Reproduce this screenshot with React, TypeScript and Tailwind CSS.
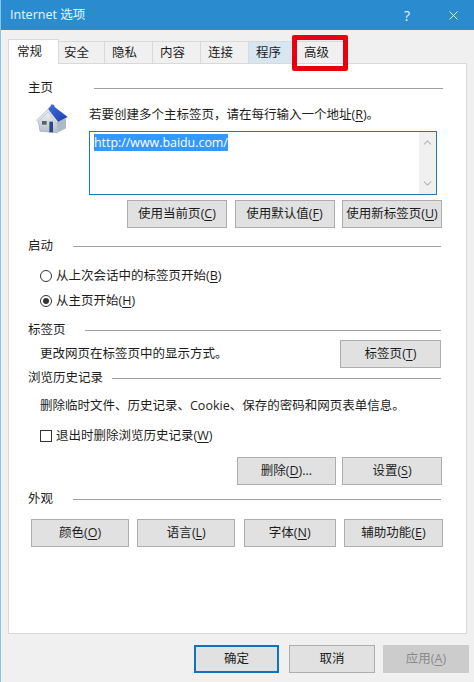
import React from 'react';
import { ChevronDown, ChevronUp, X } from 'lucide-react';

const tabs = [
  { label: '安全', cls: 'w-[46px] pl-[5px] bg-[#f0f0f0]' },
  { label: '隐私', cls: 'w-[48px] pl-[7px] bg-[#f0f0f0]' },
  { label: '内容', cls: 'w-[48px] pl-[7px] bg-[#f0f0f0]' },
  { label: '连接', cls: 'w-[48px] pl-[7px] bg-[#f0f0f0]' },
  { label: '程序', cls: 'w-[48px] pl-[7px] bg-[#d8e6f2]' },
  { label: '高级', cls: 'w-[48px] pl-[7px] bg-[#f0f0f0]' },
];

const Section = ({ title, line, className = '' }: { title: string; line: string; className?: string }) => (
  <div className={`flex items-center ${className}`}>
    <span className="whitespace-nowrap">{title}</span>
    <div className={`h-px flex-1 bg-[#a0a0a0] ${line}`} />
  </div>
);

const Btn = ({ w, label, hotkey, tail = ')' }: { w: string; label: string; hotkey?: string; tail?: string }) => (
  <div className={`flex h-[28px] items-center justify-center border border-[#adadad] bg-[#e1e1e1] whitespace-nowrap ${w}`}>
    {label}
    {hotkey && (
      <>
        (<span className="underline underline-offset-2">{hotkey}</span>{tail}
      </>
    )}
  </div>
);

const House = () => (
  <svg viewBox="48 27 96 90" className="h-[30px] w-[32px]">
    <defs>
      <linearGradient id="wall" x1="0" y1="0" x2="0" y2="1">
        <stop offset="0" stopColor="#f4f6f8" />
        <stop offset="1" stopColor="#b4bfca" />
      </linearGradient>
      <linearGradient id="roof" x1="0" y1="0" x2="1" y2="1">
        <stop offset="0" stopColor="#3f6fe0" />
        <stop offset="1" stopColor="#1a3aa8" />
      </linearGradient>
    </defs>
    <path d="M54 74 L84 46 L112 80 L112 113 L60 109 Z" fill="url(#wall)" stroke="#8c98a6" strokeWidth="1.5" />
    <path d="M112 80 L138 70 L138 100 L112 113 Z" fill="#aeb9c6" />
    <path d="M84 42 L92 33 L94 28 L102 30 L104 36 L143 66 L112 82 Z" fill="url(#roof)" />
    <path d="M49 76 L84 42 L114 80 L110 84 L84 52 L54 80 Z" fill="#dfe4ea" stroke="#8c98a6" strokeWidth="1" />
    <rect x="66" y="78" width="14" height="11" fill="#59636e" />
    <rect x="88" y="80" width="11" height="32" fill="#2c4a86" />
  </svg>
);

export default function App() {
  return (
    <div className="relative flex h-[682px] w-[474px] flex-col overflow-hidden border-l border-[#86c3ea] bg-[#f0f0f0] font-['Open_Sans','Noto_Sans_CJK_SC',sans-serif] text-[12.5px] text-[#1c1c1c]">
      {/* title bar */}
      <div className="-ml-px flex h-[30px] shrink-0 items-center bg-[#2a8ccf] pl-[10px] text-white/90">
        <span className="text-[12.5px]">Internet 选项</span>
        <span className="ml-auto mr-[36px] text-[14px]">?</span>
        <X size={15} strokeWidth={1.5} className="mr-[13px]" />
      </div>

      {/* tabs */}
      <div className="flex h-[33px] shrink-0 items-end pl-[7px]">
        <div className="relative z-10 -mb-px flex h-[25px] w-[51px] items-center border border-b-0 border-[#d9d9d9] bg-white pl-[8px]">
          常规
        </div>
        {tabs.map((t) => (
          <div key={t.label} className={`flex h-[22px] items-center border-r border-t border-[#d9d9d9] pt-[2px] ${t.cls}`}>
            {t.label}
          </div>
        ))}
      </div>

      {/* panel */}
      <div className="ml-[7px] mr-[7px] flex min-h-0 flex-1 flex-col border border-[#d9d9d9] bg-white pl-[19px] pr-[25px] pt-[14px]">
        <Section title="主页" line="ml-[41px] -mr-[2px]" className="h-5" />
        <div className="flex">
          <div className="w-[61px] shrink-0 pl-[8px] pt-[6px]">
            <House />
          </div>
          <div className="pt-[7px]">
            <div className="flex h-5 items-center whitespace-nowrap">
              若要创建多个主标签页，请在每行输入一个地址(<span className="underline underline-offset-2">R</span>)。
            </div>
            <div className="mt-[6px] flex h-[64px] w-[348px] border border-[#1f78b8] bg-white">
              <div className="flex-1 pl-[4px] pt-[2px]">
                <span className="inline-block h-[17px] bg-[#3399ff] text-[12.4px] leading-[17px] text-white">http://www.baidu.com/</span>
              </div>
              <div className="flex w-[17px] flex-col items-center justify-between bg-[#f0f0f0] py-[4px] text-[#b5b5b5]">
                <ChevronUp size={13} />
                <ChevronDown size={13} />
              </div>
            </div>
            <div className="ml-[38px] mt-[5px] flex w-[315px] justify-between">
              <Btn w="w-[100px]" label="使用当前页" hotkey="C" />
              <Btn w="w-[100px]" label="使用默认值" hotkey="F" />
              <Btn w="w-[100px]" label="使用新标签页" hotkey="U" />
            </div>
          </div>
        </div>

        <Section title="启动" line="ml-[20px]" className="mt-[8px] h-5" />
        <div className="mt-[10px] flex h-5 items-center pl-[12px]">
          <span className="mr-[4px] h-[12px] w-[12px] rounded-full border border-[#333333] bg-white" />
          从上次会话中的标签页开始(<span className="underline underline-offset-2">B</span>)
        </div>
        <div className="mt-[5px] flex h-5 items-center pl-[12px]">
          <span className="mr-[4px] flex h-[12px] w-[12px] items-center justify-center rounded-full border border-[#333333] bg-white">
            <span className="h-[6px] w-[6px] rounded-full bg-[#333333]" />
          </span>
          从主页开始(<span className="underline underline-offset-2">H</span>)
        </div>

        <Section title="标签页" line="ml-[19px]" className="mt-[9px] h-5" />
        <div className="flex items-center justify-between pl-[12px]">
          <span className="pt-px">更改网页在标签页中的显示方式。</span>
          <Btn w="w-[101px]" label="标签页" hotkey="T" />
        </div>

        <Section title="浏览历史记录" line="ml-[9px]" className="mt-[2px] h-4" />
        <div className="mt-[10px] flex h-5 items-center pl-[12px]">删除临时文件、历史记录、Cookie、保存的密码和网页表单信息。</div>
        <div className="mt-[10px] flex h-5 items-center pl-[12px]">
          <span className="mr-[4px] h-[12px] w-[12px] border border-[#333333] bg-white" />
          退出时删除浏览历史记录(<span className="underline underline-offset-2">W</span>)
        </div>
        <div className="-mr-px mt-[11px] flex justify-end gap-[6px]">
          <Btn w="w-[99px]" label="删除" hotkey="D" tail=")..." />
          <Btn w="w-[100px]" label="设置" hotkey="S" />
        </div>

        <Section title="外观" line="ml-[20px]" className="mt-[6px] h-4" />
        <div className="-mr-[2px] ml-[3px] mt-[12px] flex justify-between">
          <Btn w="w-[98px]" label="颜色" hotkey="O" />
          <Btn w="w-[98px]" label="语言" hotkey="L" />
          <Btn w="w-[92px]" label="字体" hotkey="N" />
          <Btn w="w-[99px]" label="辅助功能" hotkey="E" />
        </div>
      </div>

      {/* footer */}
      <div className="mb-[9px] mr-[5px] mt-[11px] flex shrink-0 justify-end">
        <div className="flex h-[28px] w-[85px] items-center justify-center border-2 border-[#1473b8] bg-[#e1e1e1]">确定</div>
        <div className="ml-[10px] flex h-[28px] w-[86px] items-center justify-center border border-[#adadad] bg-[#e1e1e1]">取消</div>
        <div className="ml-[8px] flex h-[28px] w-[86px] items-center justify-center bg-[#cccccc] text-[#8a8a8a]">
          应用(<span className="underline underline-offset-2">A</span>)
        </div>
      </div>

      {/* annotation box over the last tab */}
      <div className="absolute left-[291px] top-[35px] h-[36px] w-[56px] rounded-[2px] border-[5px] border-[#e8000f]" />
    </div>
  );
}
